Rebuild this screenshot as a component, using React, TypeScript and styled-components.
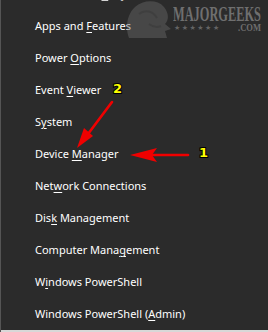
import * as React from "react"
import styled, { createGlobalStyle } from "styled-components"

interface IItem {
  before: string;
  key: string;
  after: string;
}

const items: IItem[] = [
  { before: "Apps and ", key: "F", after: "eatures" },
  { before: "Power ", key: "O", after: "ptions" },
  { before: "Event ", key: "V", after: "iewer" },
  { before: "S", key: "y", after: "stem" },
  { before: "Device ", key: "M", after: "anager" },
  { before: "Net", key: "w", after: "ork Connections" },
  { before: "Dis", key: "k", after: " Management" },
  { before: "Computer Mana", key: "g", after: "ement" },
  { before: "W", key: "i", after: "ndows PowerShell" },
  { before: "Windows PowerShell (", key: "A", after: "dmin)" },
]

const App: React.FC = () => {
  return (
    <>
      <GlobalStyle />
      <StyledMenu>
        <MenuList>
          <MenuItem $cut>Windows Mo<u>b</u>ility Center</MenuItem>
          {items.map(x => (
            <MenuItem key={x.before + x.key}>
              {x.before}<u>{x.key}</u>{x.after}
            </MenuItem>
          ))}
        </MenuList>
        <BottomEdge />
        <Watermark viewBox="0 0 140 40" width="140" height="40">
          <path
            d="M2 38 C-2 28 0 14 8 7 C16 0 30 -1 37 7 C42 13 42 20 38 24 L44 29 L38 31 L40 38 Z"
            fill="#6a6a6a"
            opacity="0.45"
          />
          <path d="M12 14 C18 9 26 11 30 18 M22 24 C26 27 30 28 34 26" stroke="#3a3a3a" strokeWidth="2" fill="none" opacity="0.6" />
          <text x="46" y="21" fontFamily="'Liberation Serif', serif" fontWeight="bold" fontSize="21" fill="#8c8c8c" opacity="0.7" textLength="88" lengthAdjust="spacingAndGlyphs">MAJORGEEKS</text>
          <text x="47" y="30" fontFamily="'DejaVu Sans', sans-serif" fontSize="7" fill="#7d7d7d" opacity="0.7" letterSpacing="1.5">★★★★★★</text>
          <text x="111" y="31" fontFamily="'Liberation Serif', serif" fontWeight="bold" fontSize="10.5" fill="#8c8c8c" opacity="0.7" textLength="23" lengthAdjust="spacingAndGlyphs">.COM</text>
        </Watermark>
        <Arrows viewBox="0 0 268 332" width="268" height="332">
          <line x1="112" y1="102" x2="88" y2="134" stroke="#f00000" strokeWidth="2.6" strokeLinecap="round" />
          <polygon points="77,148 84,128 93,136" fill="#f00000" />
          <line x1="188" y1="155" x2="150" y2="155" stroke="#f00000" strokeWidth="2.6" strokeLinecap="round" />
          <polygon points="130,155 157,148 152,155 157,162" fill="#f00000" />
          <Label x="113" y="93">2</Label>
          <Label x="199" y="157" fontSize="16">1</Label>
        </Arrows>
      </StyledMenu>
    </>
  )
}

const GlobalStyle = createGlobalStyle`
  html, body {
    margin: 0;
    padding: 0;
    background: #2b2b2b;
  }
`

const StyledMenu = styled.div`
  position: relative;
  width: 268px;
  height: 332px;
  overflow: hidden;
  background: #2b2b2b;
  border-left: 1px solid #555555;
  box-sizing: border-box;
  display: flex;
  flex-direction: column;
`

const MenuList = styled.div`
  display: flex;
  flex-direction: column;
  flex: 1;
  margin-top: -22px;
`

const MenuItem = styled.div<{ $cut?: boolean }>`
  height: 32px;
  line-height: 32px;
  padding-left: 34px;
  font-family: "Noto Sans", "Open Sans", sans-serif;
  font-size: 11px;
  color: #ffffff;
  white-space: nowrap;
  opacity: ${p => (p.$cut ? 0.8 : 1)};
  u {
    text-decoration-thickness: 1px;
    text-underline-offset: 2px;
  }
`

const BottomEdge = styled.div`
  height: 2px;
  background: #d8d8d8;
  margin-left: -1px;
`

const Watermark = styled.svg`
  position: absolute;
  top: 0;
  left: 126px;
`

const Arrows = styled.svg`
  position: absolute;
  top: 0;
  left: -1px;
  pointer-events: none;
`

const Label = styled.text`
  font-family: "DejaVu Sans", sans-serif;
  font-weight: bold;
  font-size: 13px;
  fill: #ffff00;
  stroke: #000000;
  stroke-width: 2px;
  paint-order: stroke;
`

export default App
